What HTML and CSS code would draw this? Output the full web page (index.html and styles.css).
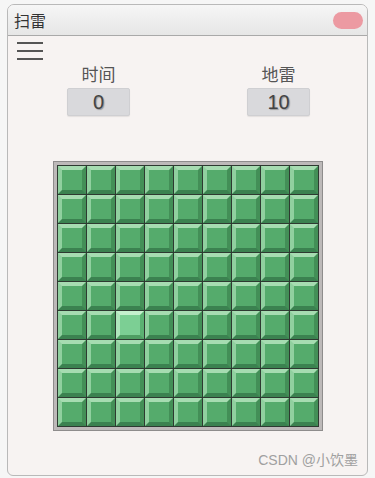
FILE: index.html
```html
<!DOCTYPE html>
<html lang="zh">
<head>
<meta charset="utf-8">
<link rel="stylesheet" href="styles.css">
</head>
<body>
<div class="window">
  <div class="titlebar">
    <span class="title">扫雷</span>
    <span class="close"></span>
  </div>
  <div class="content">
    <div class="menu">
      <span></span><span></span><span></span>
    </div>
    <div class="stats">
      <div class="stat">
        <div class="label">时间</div>
        <div class="value">0</div>
      </div>
      <div class="stat">
        <div class="label">地雷</div>
        <div class="value">10</div>
      </div>
    </div>
    <div class="board-wrap">
      <div class="board">
        <div class="grid" id="grid"></div>
      </div>
    </div>
    <div class="watermark">CSDN @小饮墨</div>
  </div>
</div>
<script>
  var g = document.getElementById('grid');
  for (var i = 0; i < 81; i++) {
    var c = document.createElement('div');
    c.className = 'cell' + (i === 47 ? ' hover' : '');
    g.appendChild(c);
  }
</script>
</body>
</html>
```

FILE: styles.css
```css
* { box-sizing: border-box; }
html, body {
  margin: 0;
  padding: 0;
}
body {
  background: #f6f6f6;
  font-family: "Noto Sans CJK SC", "Liberation Sans", sans-serif;
  width: 375px;
  height: 478px;
  overflow: hidden;
}
.window {
  margin: 4px 7px 0 7px;
  width: 361px;
  height: 472px;
  border: 1px solid #b9b9b9;
  border-radius: 7px 7px 6px 6px;
  background: #f7f3f2;
  display: flex;
  flex-direction: column;
  overflow: hidden;
}
.titlebar {
  height: 31px;
  flex: none;
  background: linear-gradient(#f6f6f6, #e6e6e6);
  border-bottom: 1px solid #a9a9a9;
  display: flex;
  align-items: center;
  justify-content: space-between;
  padding: 0 4px 0 6px;
}
.title {
  font-size: 16px;
  color: #333;
  line-height: 1;
}
.close {
  width: 30px;
  height: 17px;
  border-radius: 9px;
  background: #ec9aa2;
}
.content {
  flex: 1;
  display: flex;
  flex-direction: column;
}
.menu {
  margin: 6px 0 0 9px;
  width: 26px;
  display: flex;
  flex-direction: column;
  gap: 6px;
}
.menu span {
  display: block;
  height: 2px;
  background: #555;
}
.stats {
  display: flex;
  justify-content: space-between;
  padding: 0 57px 0 59px;
  margin-top: 4px;
}
.stat {
  display: flex;
  flex-direction: column;
  align-items: center;
  width: 63px;
}
.label {
  font-size: 17px;
  color: #555;
  line-height: 20px;
}
.value {
  margin-top: 4px;
  width: 63px;
  height: 28px;
  background: #d9d9dc;
  border: 1px solid #cfcfd2;
  border-radius: 2px;
  box-shadow: 0 1px 1px rgba(0,0,0,0.08);
  text-align: center;
  font-family: "Liberation Sans", Arial, sans-serif;
  font-size: 20px;
  line-height: 26px;
  color: #444;
  text-shadow: 1px 1px 1px rgba(0,0,0,0.3);
}
.board-wrap {
  margin-top: 45px;
  padding-left: 45px;
}
.board {
  width: 270px;
  height: 270px;
  background: #bdb9b9;
  border: 1px solid #8e8c8c;
  padding: 3px;
}
.grid {
  width: 262px;
  height: 262px;
  background: #2e3a31;
  padding: 1px;
  display: grid;
  grid-template-columns: repeat(9, 28px);
  grid-template-rows: repeat(9, 28px);
  gap: 1px;
}
.cell {
  background: #55ab6c;
  border-style: solid;
  border-width: 4px;
  border-color: #a6dcb1 #438f57 #3b8250 #90d09f;
}
.cell.hover {
  background: #7ccf94;
  border-color: #c4f0cd #5bb172 #4f9e63 #b0e6bc;
}
.watermark {
  margin-top: auto;
  align-self: flex-end;
  margin-right: 9px;
  margin-bottom: 6px;
  font-size: 14px;
  color: #a0a0a0;
  font-family: "Liberation Sans", "Noto Sans CJK SC", sans-serif;
}
```
